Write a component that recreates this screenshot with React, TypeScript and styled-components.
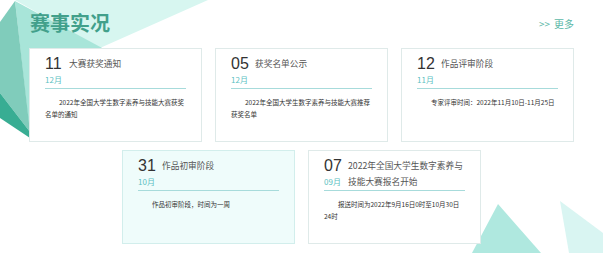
import React from "react";
import styled, { createGlobalStyle } from "styled-components";

const GlobalStyle = createGlobalStyle`
  html, body { margin: 0; padding: 0; background: #ffffff; }
  body { font-family: "Noto Sans CJK SC", "Noto Sans", sans-serif; }
`;

const Page = styled.div`
  position: relative;
  width: 603px;
  height: 253px;
  overflow: hidden;
  background: #ffffff;
`;

const Decor = styled.svg`
  position: absolute;
  left: 0;
  top: 0;
  width: 603px;
  height: 253px;
  z-index: 0;
`;

const Content = styled.div`
  position: relative;
  z-index: 1;
  display: flex;
  flex-direction: column;
`;

const Header = styled.div`
  height: 48px;
  display: flex;
  align-items: center;
  justify-content: space-between;
  padding: 0 29px 2px 30px;
  box-sizing: border-box;
`;

const Heading = styled.h1`
  margin: 0;
  font-size: 20px;
  line-height: 24px;
  font-weight: 700;
  color: #42a08b;
  letter-spacing: 0;
`;

const More = styled.a`
  font-size: 10px;
  line-height: 12px;
  color: #5cb8a8;
  text-decoration: none;
  display: flex;
  gap: 4px;
  margin-top: 1px;
`;

const Row = styled.div`
  display: flex;
  justify-content: center;
  gap: 13px;
  margin-bottom: 8px;
`;

const Card = styled.div<{ $active?: boolean }>`
  width: 173px;
  height: 94px;
  box-sizing: border-box;
  border: 1px solid ${(p) => (p.$active ? "#d2eeec" : "#dfeae9")};
  background: ${(p) => (p.$active ? "#effcfb" : "#ffffff")};
  padding: 7px 15px 0 15px;
  display: flex;
  flex-direction: column;
`;

const Head = styled.div`
  display: flex;
  align-items: flex-start;
`;

const DateCol = styled.div`
  width: 24px;
  flex: none;
  display: flex;
  flex-direction: column;
`;

const Day = styled.span`
  font-family: "Liberation Sans", "Noto Sans", sans-serif;
  font-size: 16px;
  line-height: 16px;
  height: 16px;
  color: #333333;
  font-weight: 400;
`;

const Month = styled.span`
  font-size: 8px;
  line-height: 16px;
  color: #5cbfc2;
`;

const Title = styled.div`
  flex: 1;
  font-size: 8.7px;
  line-height: 16px;
  color: #555555;
  min-height: 32px;
`;

const Divider = styled.div`
  height: 1px;
  background: #a7dbdb;
`;

const Body = styled.p`
  margin: 7px 0 0 0;
  font-size: 6.5px;
  line-height: 12px;
  color: #333333;
  text-indent: 14px;
`;

type Item = { day: string; month: string; title: string; body: string; active?: boolean };

const row1: Item[] = [
  { day: "11", month: "12月", title: "大赛获奖通知", body: "2022年全国大学生数字素养与技能大赛获奖名单的通知" },
  { day: "05", month: "12月", title: "获奖名单公示", body: "2022年全国大学生数字素养与技能大赛推荐获奖名单" },
  { day: "12", month: "11月", title: "作品评审阶段", body: "专家评审时间：2022年11月10日-11月25日" },
];

const row2: Item[] = [
  { day: "31", month: "10月", title: "作品初审阶段", body: "作品初审阶段，时间为一周", active: true },
  { day: "07", month: "09月", title: "2022年全国大学生数字素养与技能大赛报名开始", body: "报送时间为2022年9月16日0时至10月30日24时" },
];

function NewsCard({ item }: { item: Item }) {
  return (
    <Card $active={item.active}>
      <Head>
        <DateCol>
          <Day>{item.day}</Day>
          <Month>{item.month}</Month>
        </DateCol>
        <Title>{item.title}</Title>
      </Head>
      <Divider />
      <Body>{item.body}</Body>
    </Card>
  );
}

export default function App() {
  return (
    <Page>
      <GlobalStyle />
      <Decor viewBox="0 0 603 253">
        <polygon points="15,0 208,0 100,48" fill="#d7f6f0" />
        <polygon points="15,1 104,49 30,136" fill="#a8e5d9" />
        <polygon points="0,22 15,1 30,132 0,93" fill="#80ccbb" />
        <polygon points="0,93 30,132 30,138 0,118" fill="#38ad93" />
        <polygon points="498,204 472,253 541,253" fill="#afe8df" />
        <polygon points="560,201 603,233 603,253 569,253" fill="#d9f5f2" />
      </Decor>
      <Content>
        <Header>
          <Heading>赛事实况</Heading>
          <More href="#">
            <span>&gt;&gt;</span>
            <span>更多</span>
          </More>
        </Header>
        <Row>
          {row1.map((it) => (
            <NewsCard key={it.day + it.title} item={it} />
          ))}
        </Row>
        <Row>
          {row2.map((it) => (
            <NewsCard key={it.day + it.title} item={it} />
          ))}
        </Row>
      </Content>
    </Page>
  );
}
